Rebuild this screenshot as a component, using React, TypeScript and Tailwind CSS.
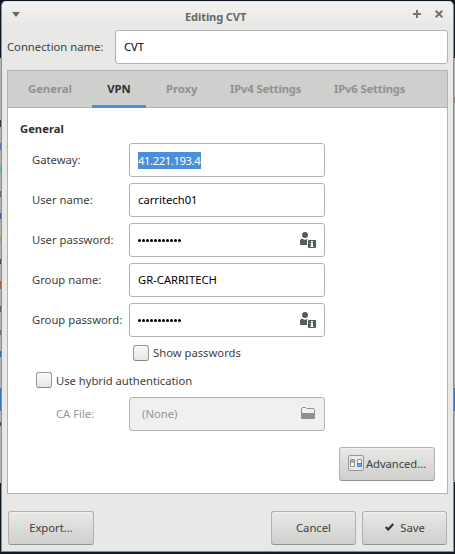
import React from "react";

const FIELD = "flex h-[34px] w-[196px] items-center rounded-[3px] border border-[#b2b2b0] bg-white pl-2 pr-2 text-black";
const BUTTON =
  "flex h-[34px] items-center justify-center rounded-[3px] border border-[#b0b0ae] border-b-[#929290] bg-linear-to-b from-[#e8e8e6] to-[#cfcfcd] shadow-[inset_0_1px_0_#f1f1ef]";

function UserInfoIcon() {
  return (
    <svg width="16" height="16" viewBox="0 0 16 16" className="block" fill="#555c5d">
      <circle cx="5" cy="3" r="3" />
      <path d="M0 13V9.2C0 7.8 .9 7 2.2 6.8L5 8l2.6-1.200c.5 0 .8.2 1 .5H7V13z" />
      <path fillRule="evenodd" d="M8.500 8h7l.5.5v7l-.5.5h-7l-.5-.5v-7zM11 9v1.500h2V9zM10.500 11v1h.6v2h-.6v1h3v-1H13v-3z" />
    </svg>
  );
}

function FolderIcon() {
  return (
    <svg width="14" height="12" viewBox="0 0 14 12" className="block">
      <path d="M.5 11V1.5l.8-1h3.4l1 1h7l.8.8V11z" fill="#f0f0f0" stroke="#8e9192" />
      <path d="M0 6h14v5l-1 1H1l-1-1z" fill="#8e9192" />
    </svg>
  );
}

function PreferencesIcon() {
  return (
    <svg width="16" height="16" viewBox="0 0 16 16" className="block">
      <rect x=".5" y=".5" width="15" height="15" rx=".7" fill="#e9eaeb" stroke="#969899" />
      <path d="M2 2h1v1H2zM13 2h1v1h-1zM2 13h1v1H2zM13 13h1v1h-1z" fill="#b1b3b4" />
      <rect x="2.5" y="4.5" width="4" height="7" rx=".5" fill="#fff" stroke="#8a8d8e" />
      <path d="M3 5h3v3H3z" fill="#aaacad" />
      <rect x="9.5" y="4.5" width="4" height="7" rx=".5" fill="#fff" stroke="#8a8d8e" />
      <path d="M9 8h5v3l-1 1h-3l-1-1z" fill="#3f86cc" />
      <path d="M10 9h3v2h-3z" fill="#65adec" />
    </svg>
  );
}

function CheckBox() {
  return (
    <span className="block size-4 shrink-0 rounded-[3px] border border-[#989894] border-b-[#858581] bg-linear-to-b from-[#fafafa] to-[#e7e7e5]" />
  );
}

function Row({ label, children }: { label: string; children: React.ReactNode }) {
  return (
    <div className="flex h-[34px] items-center">
      <span className="w-[97px] shrink-0">{label}</span>
      {children}
    </div>
  );
}

function Password() {
  return (
    <div className={FIELD}>
      <span className="flex gap-[1px]">
        {Array.from({ length: 11 }, (_, i) => (
          <span key={i} className="size-[3px] rounded-full bg-black" />
        ))}
      </span>
      <span className="ml-auto"><UserInfoIcon /></span>
    </div>
  );
}

export default function App() {
  return (
    <div className="flex h-[554px] w-[455px] overflow-hidden bg-[#101b28] font-['Noto_Sans',sans-serif] text-[11.25px] leading-4 whitespace-nowrap text-[#3c3f40]">
      <div className="flex w-px shrink-0 flex-col pt-[58px]">
        <div className="h-[62px] bg-[#b5b5b5]" />
        <div className="h-[7px] bg-[#4a2b52]" />
        <div className="h-4 bg-[#b5b5b5]" />
        <div className="h-[7px] bg-[#5479aa]" />
        <div className="h-4 bg-[#b5b5b5]" />
        <div className="h-2 bg-[#6bb5bd]" />
        <div className="h-[17px] bg-[#b5b5b5]" />
        <div className="h-[6px] bg-[#666a70]" />
        <div className="h-4 bg-[#b5b5b5]" />
        <div className="h-[6px] bg-[#3d5d91]" />
        <div className="h-[17px] bg-[#b5b5b5]" />
        <div className="h-[6px] bg-[#c19b6f]" />
        <div className="h-[17px] bg-[#b5b5b5]" />
        <div className="h-[5px] bg-[#304f86]" />
        <div className="h-[17px] bg-[#b5b5b5]" />
        <div className="h-2 bg-[#9a6445]" />
        <div className="h-[17px] bg-[#b5b5b5]" />
        <div className="h-[6px] bg-[#625d5a]" />
        <div className="h-[18px] bg-[#b5b5b5]" />
        <div className="h-[5px] bg-[#5e6d87]" />
        <div className="h-4 bg-[#b5b5b5]" />
        <div className="h-[6px] bg-[#3c6c9f]" />
        <div className="h-[31px] bg-[#b5b5b5]" />
        <div className="h-[23px] bg-[#3873b5]" />
        <div className="h-[11px] bg-[#b5b5b5]" />
        <div className="h-1 bg-[#4b486d]" />
        <div className="h-[57px] bg-[#b5b5b5]" />
      </div>

      <div className="mt-px flex h-[551px] w-[453px] shrink-0 flex-col rounded-t-[5px] border border-[#8c8c8a] border-t-[#e0e0de] bg-[#e8e8e6] bg-linear-to-b from-[#f2f2f1] to-[#e8e8e6] to-[24px]">
        <header className="flex h-7 shrink-0 items-center pr-[10px] pl-[10px]">
          <svg width="8" height="5" viewBox="0 0 8 5" className="mb-[3px]"><path d="M0 0h8L4 5z" fill="#686868" /></svg>
          <span className="ml-[165px] pt-px text-[11.100px] font-bold tracking-[-0.12px] text-[#686868]">Editing CVT</span>
          <svg width="8" height="8" viewBox="0 0 8 8" className="mb-1 ml-auto"><path d="M3 0h2v3h3v2H5v3H3V5H0V3h3z" fill="#747474" /></svg>
          <svg width="8" height="8" viewBox="0 0 8 8" className="mb-1 ml-[14px]"><path d="M.7.7l6.600 6.600M7.300.7L.7 7.300" stroke="#747474" strokeWidth="2" /></svg>
        </header>

        <div className="flex h-[34px] shrink-0 items-center pl-[5px]">
          <span className="w-[108px]">Connection name:</span>
          <div className="flex h-[34px] w-[333px] items-center rounded-[3px] border border-[#b2b2b0] bg-white pl-2 text-black">CVT</div>
        </div>

        <main className="mt-[6px] ml-[5px] flex h-[424px] w-[441px] shrink-0 flex-col border border-[#b2b2b0] bg-white">
          <nav className="flex h-[37px] shrink-0 items-center border-b border-[#b2b2b0] bg-[#cfcfcd] font-bold text-[#909190]">
            <span className="w-[84px] pl-5">General</span>
            <span className="flex h-[37px] w-[54px] items-center justify-center border-b-[3px] border-[#4a90d9] pt-[3px] text-[#2d3132]">VPN</span>
            <span className="w-[84px] pl-5">Proxy</span>
            <span className="w-[104px] tracking-[-0.15px]">IPv4 Settings</span>
            <span className="tracking-[-0.15px]">IPv6 Settings</span>
          </nav>
          <section className="flex flex-col pl-3">
            <h2 className="mt-[13px] h-4 font-bold text-[#2d3132]">General</h2>
            <div className="mt-[6px] flex flex-col gap-[6px] pl-3">
              <Row label="Gateway:">
                <div className={FIELD}><span className="h-[17px] w-[63px] bg-[#4a90d9] leading-[17px] tracking-[-0.39px] text-white">41.221.193.4</span></div>
              </Row>
              <Row label="User name:"><div className={FIELD}>carritech01</div></Row>
              <Row label="User password:"><Password /></Row>
              <Row label="Group name:"><div className={FIELD}>GR-CARRITECH</div></Row>
              <Row label="Group password:"><Password /></Row>
            </div>
            <div className="mt-2 ml-[113px] flex h-4 items-center gap-1"><CheckBox /><span>Show passwords</span></div>
            <div className="mt-[11px] ml-4 flex h-4 items-center gap-1"><CheckBox /><span className="pt-[2px] tracking-[-0.03px]">Use hybrid authentication</span></div>
            <div className="mt-[9px] flex h-[34px] items-center pl-9 text-[#929596]">
              <span className="w-[73px]">CA File:</span>
              <div className="flex h-[34px] w-[196px] items-center rounded-[3px] border border-[#b2b2b0] bg-[#f0f0f0] pr-[9px] pl-3">
                <span>(None)</span><span className="mb-[2px] ml-auto"><FolderIcon /></span>
              </div>
            </div>
          </section>
          <div className="mt-4 flex justify-end pr-3">
            <div className={BUTTON + " w-[96px] gap-[2px]"}><span className="mb-[2px]"><PreferencesIcon /></span><span className="tracking-[-0.05px]">Advanced...</span></div>
          </div>
        </main>

        <footer className="mt-[17px] flex h-[34px] shrink-0 pr-[6px] pl-[6px]">
          <div className={BUTTON + " w-[86px]"}>Export...</div>
          <div className={BUTTON + " ml-auto w-[85px]"}>Cancel</div>
          <div className={BUTTON + " ml-[6px] w-[85px] gap-[6px] pl-px"}>
            <svg width="9" height="8" viewBox="0 0 9 8" className="mb-[2px]"><path d="M.8 4l2.400 2.500L8.200 1" fill="none" stroke="#2e3436" strokeWidth="2.200" /></svg>
            <span>Save</span>
          </div>
        </footer>
      </div>

      <div className="flex w-px shrink-0 flex-col pt-[58px]">
        <div className="h-[39px] bg-[#b5b5b5]" />
        <div className="h-[6px] bg-[#a08a86]" />
        <div className="h-[285px] bg-[#b5b5b5]" />
        <div className="h-[23px] bg-[#3873b5]" />
        <div className="h-[71px] bg-[#b5b5b5]" />
      </div>
    </div>
  );
}
